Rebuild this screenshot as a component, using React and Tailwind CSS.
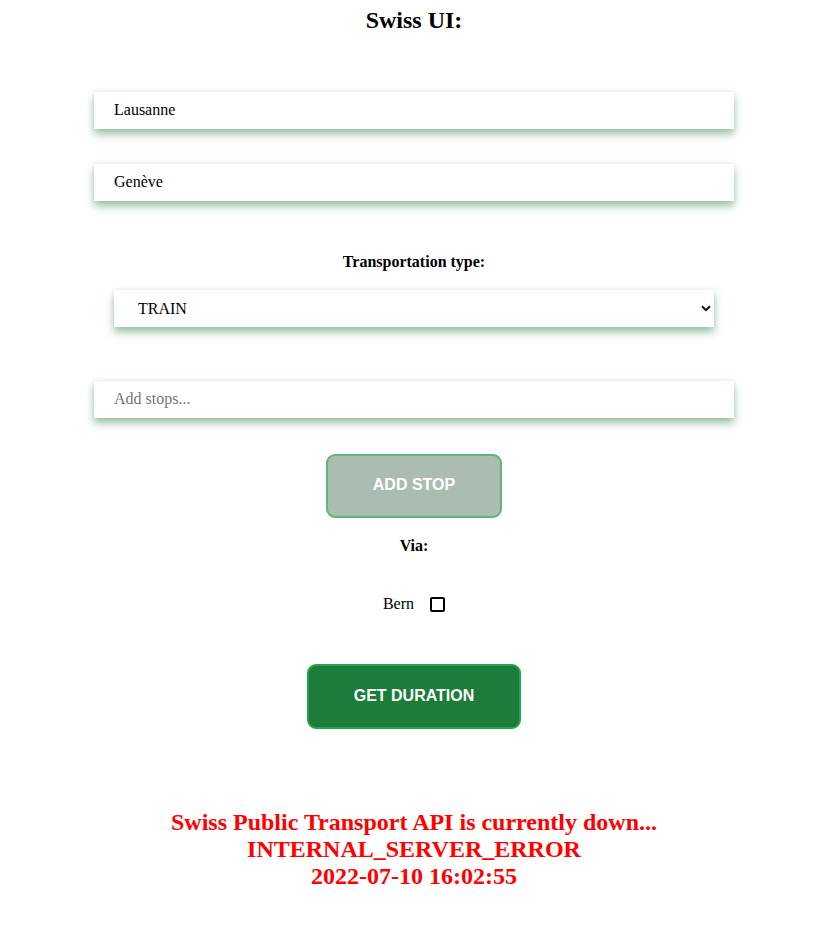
export default function App() {
  const serif = { fontFamily: '"Liberation Serif", "Times New Roman", serif' };
  return (
    <div className="w-full bg-white flex flex-col items-center text-black" style={serif}>
      <div className="mt-[6px] h-[28px] leading-[28px] text-[24px] font-bold">Swiss UI:</div>

      <div className="mt-[58px] w-[640px] h-[37px] bg-white flex items-center pl-[20px] pb-[2px] text-[16px] shadow-[0_5px_8px_rgba(50,125,75,0.5),0_-1px_4px_rgba(0,0,0,0.05)]">
        Lausanne
      </div>
      <div className="mt-[35px] w-[640px] h-[37px] bg-white flex items-center pl-[20px] pb-[2px] text-[16px] shadow-[0_5px_8px_rgba(50,125,75,0.5),0_-1px_4px_rgba(0,0,0,0.05)]">
        Genève
      </div>

      <div className="mt-[51px] h-[20px] leading-[20px] text-[16px] font-bold">Transportation type:</div>

      <div className="mt-[18px] w-[600px] h-[37px] bg-white flex items-center justify-between pl-[24px] pr-[3px] text-[16px] shadow-[0_5px_8px_rgba(50,125,75,0.5),0_-1px_4px_rgba(0,0,0,0.05)]">
        <span>TRAIN</span>
        <svg width="10" height="7" viewBox="0 0 10 7">
          <path d="M1 1.2 L5 5.2 L9 1.2" fill="none" stroke="#111" strokeWidth="2" />
        </svg>
      </div>

      <div className="mt-[54px] w-[640px] h-[37px] bg-white flex items-center pl-[20px] pb-[2px] text-[16px] text-[#757575] shadow-[0_5px_8px_rgba(50,125,75,0.5),0_-1px_4px_rgba(0,0,0,0.05)]">
        Add stops...
      </div>

      <div
        className="mt-[36px] w-[176px] h-[64px] pb-[2px] rounded-[9px] border-2 border-[#5fb67c] bg-[#abbdb0] flex items-center justify-center text-white text-[16px] font-bold"
        style={{ fontFamily: '"Liberation Sans", Arial, sans-serif' }}
      >
        ADD STOP
      </div>

      <div className="mt-[18px] h-[20px] leading-[20px] text-[16px] font-bold">Via:</div>

      <div className="mt-[38px] h-[20px] leading-[20px] text-[16px] flex items-center gap-[16px]">
        <span>Bern</span>
        <span className="w-[15px] h-[15px] border-2 border-black rounded-[2px] bg-white" />
      </div>

      <div
        className="mt-[50px] w-[214px] h-[65px] pb-[2px] rounded-[9px] border-2 border-[#22a64b] bg-[#1b7d39] flex items-center justify-center text-white text-[16px] font-bold"
        style={{ fontFamily: '"Liberation Sans", Arial, sans-serif' }}
      >
        GET DURATION
      </div>

      <div className="mt-[80px] text-center text-[24px] leading-[27px] font-bold text-[#ff0000]">
        <div>Swiss Public Transport API is currently down...</div>
        <div>INTERNAL_SERVER_ERROR</div>
        <div>2022-07-10 16:02:55</div>
      </div>
    </div>
  );
}
